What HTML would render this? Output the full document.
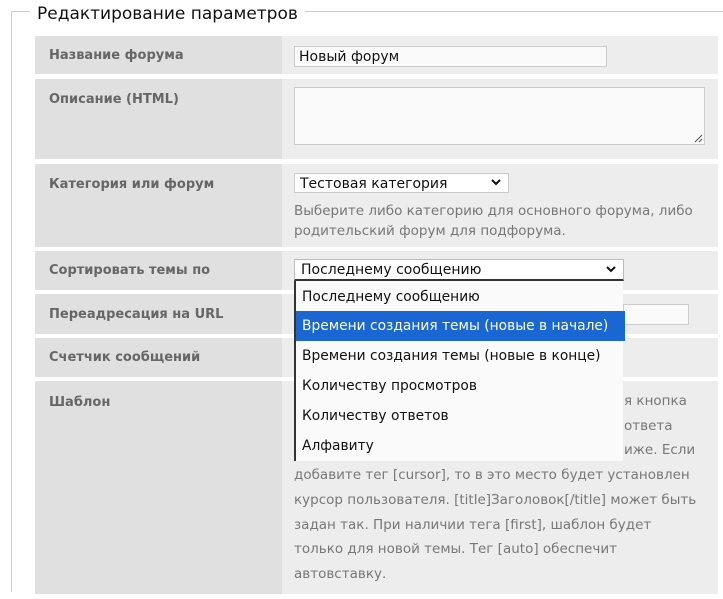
<!DOCTYPE html>
<html><head><meta charset="utf-8"><style>
html,body{margin:0;width:723px;height:599px;overflow:hidden}
body{background:#fff;position:relative;font-family:"DejaVu Sans","Liberation Sans",sans-serif;}
.a{position:absolute}
.lab{position:absolute;left:35px;width:247px;background:#dfe0df;}
.val{position:absolute;left:282px;width:436px;background:#ededed;}
.lt{position:absolute;left:49px;font-weight:bold;font-size:13px;color:#666;}
.t{position:absolute;font-size:13.5px;color:#777;white-space:nowrap}
.box{position:absolute;background:#fafafa;border:1px solid #ccc;box-sizing:border-box}
.opt{position:absolute;left:0;width:329px;height:30px;line-height:30px;padding-left:6px;box-sizing:border-box;font-size:13.8px;color:#111;white-space:nowrap}
</style></head><body>
<div class="a" style="left:11px;top:11px;width:720px;height:580px;border:1px solid #ccc;border-right:none;border-bottom:none"></div>
<div class="a" style="left:30px;top:0;height:24px;padding:0 7px;background:#fff;font-size:17px;line-height:28px;color:#111">Редактирование параметров</div>

<div class="lab" style="top:36px;height:38px"></div><div class="val" style="top:36px;height:38px"></div>
<div class="lab" style="top:79px;height:80px"></div><div class="val" style="top:79px;height:80px"></div>
<div class="lab" style="top:164px;height:83px"></div><div class="val" style="top:164px;height:83px"></div>
<div class="lab" style="top:251px;height:39px"></div><div class="val" style="top:251px;height:39px"></div>
<div class="lab" style="top:294px;height:40px"></div><div class="val" style="top:294px;height:40px"></div>
<div class="lab" style="top:338px;height:39px"></div><div class="val" style="top:338px;height:39px"></div>
<div class="lab" style="top:381px;height:213px"></div><div class="val" style="top:381px;height:213px"></div>

<div class="lt" style="top:48px">Название форума</div>
<div class="lt" style="top:92px">Описание (HTML)</div>
<div class="lt" style="top:177px">Категория или форум</div>
<div class="lt" style="top:263px">Сортировать темы по</div>
<div class="lt" style="top:307px">Переадресация на URL</div>
<div class="lt" style="top:350px">Счетчик сообщений</div>
<div class="lt" style="top:395px">Шаблон</div>

<div class="box" style="left:294px;top:46px;width:313px;height:21px;font-size:14px;line-height:21px;padding-left:4px;color:#111">Новый форум</div>
<div class="box" style="left:294px;top:87px;width:411px;height:58px"></div>
<svg class="a" style="left:693px;top:133px" width="10" height="10"><path d="M2 9L9 2M6 9L9 6" stroke="#555" stroke-width="1"/></svg>
<div class="box" style="left:294px;top:173px;width:215px;height:20px;background:#fff;font-size:14px;line-height:20px;padding-left:5px;color:#111">Тестовая категория</div>
<svg class="a" style="left:490px;top:178px" width="12" height="10"><path d="M2 2L6 6L10 2" stroke="#111" stroke-width="2" fill="none"/></svg>
<div class="t" style="left:294px;top:201px;line-height:20px">Выберите либо категорию для основного форума, либо<br>родительский форум для подфорума.</div>

<div class="box" style="left:623px;top:304px;width:66px;height:21px"></div>

<div class="t" style="left:294px;top:389px;line-height:24.7px">&nbsp;<br>&nbsp;<br>&nbsp;<br>добавите тег [cursor], то в это место будет установлен<br>курсор пользователя. [title]Заголовок[/title] может быть<br>задан так. При наличии тега [first], шаблон будет<br>только для новой темы. Тег [auto] обеспечит<br>автовставку.</div>
<div class="t" style="left:624px;top:389px;line-height:24.7px">я кнопка<br>ответа<br>иже. Если</div>

<div class="box" style="left:294px;top:259px;width:330px;height:22px;background:#fff;border-color:#bbb;border-bottom:2px solid #333;font-size:14px;line-height:21px;padding-left:6px;color:#111">Последнему сообщению</div>
<svg class="a" style="left:605px;top:265px" width="12" height="10"><path d="M2 2L6 6L10 2" stroke="#111" stroke-width="2" fill="none"/></svg>
<div class="a" style="left:294px;top:281px;width:329px;height:180px;background:#fafafa;border-left:2px solid #333;box-sizing:border-box">
<div class="opt" style="top:1px">Последнему сообщению</div>
<div class="opt" style="top:30px;background:#1a66d2;color:#fff">Времени создания темы (новые в начале)</div>
<div class="opt" style="top:60px">Времени создания темы (новые в конце)</div>
<div class="opt" style="top:90px">Количеству просмотров</div>
<div class="opt" style="top:120px">Количеству ответов</div>
<div class="opt" style="top:150px">Алфавиту</div>
</div>
</body></html>
